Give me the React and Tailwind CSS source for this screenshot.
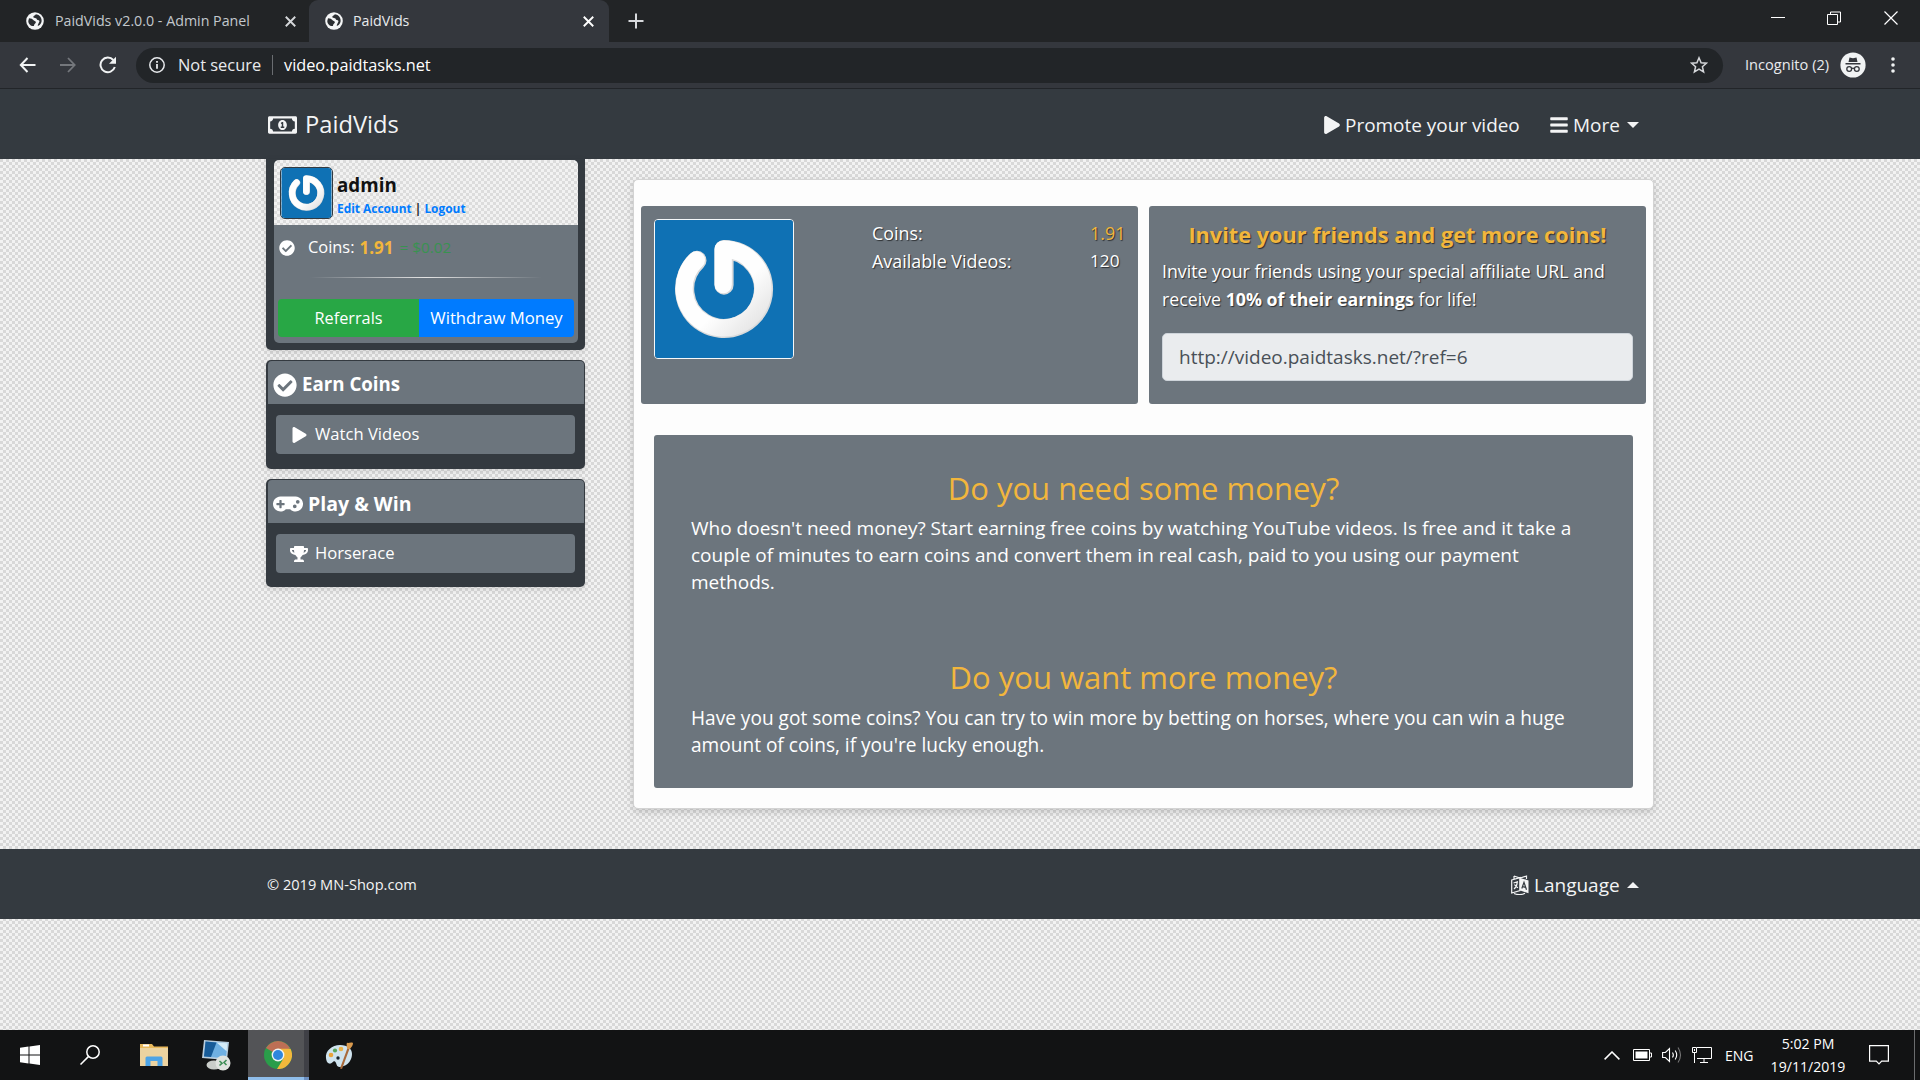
import React from "react";
import { FaPlay, FaBars, FaCheckCircle, FaGamepad, FaTrophy, FaRegMoneyBillAlt } from "react-icons/fa";

function Globe() {
  return (
    <svg viewBox="0 0 18 18" className="h-[18px] w-[18px] shrink-0">
      <circle cx="9" cy="9" r="8.8" fill="#f4f5f6" />
      <path d="M3 6.200c2.200.2 3.800.8 4.300 1.800.4 1 2.700 1 2.600 2.300-.1 1.300-1.800 1.300-2 3.700C5 14.500 2.300 12 2.300 9z" fill="#2b2e32" />
      <path d="M9.800 2.300c-.2 1.200-2.300 1.200-2.500 2.500-.1 1.200 1.500 1.200 2.600 1.400 1 .2.700 1.600 1.900 1.800 1.500.2 2.100 1 1.300 2.300-.7 1-.8 2-1.500 3.200l.9.3c2.200-1.300 3.400-3.500 3.100-5.800C15.200 4.900 12.800 2.500 9.800 2.300z" fill="#2b2e32" />
    </svg>
  );
}

function Cross({ className }) {
  return (
    <svg viewBox="0 0 10 10" className={className} fill="none" stroke="currentColor">
      <path d="M.7.7l8.600 8.600M9.300.7L.7 9.300" strokeWidth="1.700" />
    </svg>
  );
}

function Avatar({ className }) {
  return (
    <svg viewBox="0 0 140 140" className={className}>
      <defs>
        <linearGradient id="ring" x1="0" y1="0" x2="1" y2="1">
          <stop offset="0.6" stopColor="#fefefe" />
          <stop offset="1" stopColor="#e2e2e2" />
        </linearGradient>
      </defs>
      <rect width="140" height="140" fill="#0f71b4" />
      <g fill="none" strokeLinecap="round" strokeLinejoin="round">
        <path d="M42.500 41A40 40 0 1 0 70 30V66" stroke="#d9dadb" strokeWidth="19.500" />
        <path d="M42 40.500A40 40 0 1 0 69.200 29.500V65.500" stroke="url(#ring)" strokeWidth="17.500" />
      </g>
    </svg>
  );
}

function BrowserChrome() {
  return (
    <header className="bg-[#222426] text-[#e8eaed]">
      <div className="flex h-[42px]">
        <div className="flex w-[309px] items-center pl-[26px]">
          <Globe />
          <span className="ml-[11px] w-[197px] text-[14.25px] text-[#c3c8cd]">PaidVids v2.0.0 - Admin Panel</span>
          <Cross className="ml-[33px] h-[11px] w-[11px] text-[#d5d7da]" />
        </div>
        <div className="flex w-[300px] items-center rounded-t-[9px] bg-[#34373d] pl-[16px]">
          <Globe />
          <span className="ml-[10px] w-[57px] text-[14.25px]">PaidVids</span>
          <Cross className="ml-[173px] h-[11px] w-[11px] text-white" />
        </div>
        <svg viewBox="0 0 16 16" className="ml-[19px] mt-[13px] h-[16px] w-[16px]" stroke="#d8dadd" strokeWidth="2">
          <path d="M8 .5v15M.5 8h15" />
        </svg>
        <div className="ml-auto flex items-start pt-[11px]">
          <svg viewBox="0 0 14 14" className="mr-[42px] h-[14px] w-[14px]" stroke="#fff" fill="none">
            <path d="M0 6.500h14" />
          </svg>
          <svg viewBox="0 0 14 14" className="mr-[43px] h-[14px] w-[14px]" stroke="#fff" fill="none">
            <path d="M.5 3.500h10v10h-10zM3.500 3V1h10v10h-3" />
          </svg>
          <svg viewBox="0 0 14 14" className="mr-[22px] h-[14px] w-[14px]" stroke="#fff" strokeWidth="1.200" fill="none">
            <path d="M.5.5l13 13M13.500.5l-13 13" />
          </svg>
        </div>
      </div>
      <div className="flex h-[47px] items-center border-b border-[#222529] bg-[#34373d] pl-[19px]">
        <svg viewBox="0 0 16 16" className="h-[16px] w-[17px]" fill="none" stroke="#f1f3f4" strokeWidth="2">
          <path d="M16 8H1.500M8 1L1.300 8 8 15" />
        </svg>
        <svg viewBox="0 0 16 16" className="ml-[24px] h-[16px] w-[16px]" fill="none" stroke="#74777c" strokeWidth="1.800">
          <path d="M0 8h14.500M8 1l6.700 7L8 15" />
        </svg>
        <svg viewBox="0 0 18 18" className="ml-[23px] h-[18px] w-[18px]" fill="none" stroke="#f1f3f4" strokeWidth="2">
          <path d="M15.800 11A7.300 7.300 0 1 1 14.300 4" />
          <path d="M17 .8v7H10z" fill="#f1f3f4" stroke="none" />
        </svg>
        <div className="ml-[19px] flex h-[35px] w-[1587px] items-center rounded-full bg-[#222528] pl-[13px]">
          <svg viewBox="0 0 16 16" className="h-[16px] w-[16px]" fill="none" stroke="#e8eaed" strokeWidth="1.500">
            <circle cx="8" cy="8" r="7.200" />
            <path d="M8 7v4.800M8 4v1.700" strokeWidth="1.800" />
          </svg>
          <span className="ml-[13px] w-[83px] whitespace-nowrap text-[16.4px]">Not secure</span>
          <span className="ml-[11px] h-[20px] w-px bg-[#6a6d71]" />
          <span className="ml-[11px] text-[16.3px] text-white">video.paidtasks.net</span>
          <svg viewBox="0 0 18 18" className="ml-auto mr-[15px] h-[18px] w-[18px]" fill="none" stroke="#d5d7da" strokeWidth="1.500">
            <path d="M9 1.800l2.100 4.900 5.300.5-4 3.500 1.200 5.200L9 13.100l-4.600 2.800 1.200-5.200-4-3.500 5.300-.5z" />
          </svg>
        </div>
        <span className="ml-[22px] w-[84px] whitespace-nowrap text-[14.6px]">Incognito (2)</span>
        <svg viewBox="0 0 26 26" className="ml-[11px] h-[26px] w-[26px]">
          <circle cx="13" cy="13" r="12.600" fill="#f1f3f4" />
          <path d="M9.500 5.500l3.500.8 3.500-.8 1 4.500h-9zM5.500 11h15v1.500h-15z" fill="#34373d" />
          <g fill="none" stroke="#34373d" strokeWidth="1.300">
            <circle cx="9.200" cy="17" r="2.400" />
            <circle cx="16.800" cy="17" r="2.400" />
            <path d="M11.600 16.600q1.400-.8 2.800 0" />
          </g>
        </svg>
        <svg viewBox="0 0 4 18" className="ml-[25px] h-[18px] w-[4px]" fill="#f1f3f4">
          <circle cx="2" cy="3" r="1.800" />
          <circle cx="2" cy="9" r="1.800" />
          <circle cx="2" cy="15" r="1.800" />
        </svg>
      </div>
    </header>
  );
}

function Navbar() {
  return (
    <nav className="flex h-[70px] shrink-0 items-center bg-[#343a40] pt-[2px] pl-[268px] pr-[281px] text-[#f3f4f5]">
      <FaRegMoneyBillAlt className="h-[24px] w-[29px]" />
      <span className="ml-[8px] text-[23.7px]">PaidVids</span>
      <FaPlay className="ml-auto h-[18px] w-[16px]" />
      <span className="ml-[5px] w-[176px] whitespace-nowrap text-[18.95px]">Promote your video</span>
      <FaBars className="ml-[29px] h-[20px] w-[18px]" />
      <span className="ml-[5px] w-[48px] text-[18.95px]">More</span>
      <span className="ml-[6px] border-x-[6px] border-t-[6px] border-x-transparent border-t-[#f3f4f5]" />
    </nav>
  );
}

function AccountCard() {
  return (
    <section className="h-[191px] rounded-b-[5px] bg-[#343a40] pl-[8px] pr-[7px] pt-px text-white shadow-[0_2px_6px_rgba(0,0,0,.12)]">
      <div className="h-[183px] overflow-hidden rounded-[5px] bg-[#6c757d]">
        <div className="flex h-[65px] bg-[repeating-conic-gradient(#dcdcdc_0_25%,#f2f2f2_0_50%)] bg-[length:6px_6px] pl-[6px] pt-[7px]">
          <Avatar className="h-[52px] w-[53px] rounded-[5px] border border-[#343a40]" />
          <div className="ml-[4px] pt-[5px]">
            <div className="text-[18.8px] leading-[26px] font-bold text-[#111]">admin</div>
            <div className="mt-[1px] whitespace-nowrap text-[11.9px] leading-[18px] font-bold text-[#007bff]">
              Edit Account <span className="text-[#222]">|</span> Logout
            </div>
          </div>
        </div>
        <div className="flex h-[45px] items-center pl-[5px] text-[16.4px]">
          <FaCheckCircle className="h-[16px] w-[16px]" />
          <span className="ml-[13px]">Coins:</span>
          <span className="ml-[5px] text-[17px] font-bold text-[#f2b63c]">1.91</span>
          <span className="ml-[6px] text-[15.300px] text-[#399251]">= $0.02</span>
        </div>
        <div className="mx-[36px] mt-[7px] h-px bg-[linear-gradient(90deg,transparent,#e4e4e4_50%,transparent)]" />
        <div className="mx-[4px] mt-[21px] flex h-[38px] overflow-hidden rounded-[4px]">
          <div className="flex w-[141px] items-center justify-center bg-[#28a745] text-[16.3px]">Referrals</div>
          <div className="flex flex-1 items-center justify-center bg-[#007bff] text-[16.7px]">Withdraw Money</div>
        </div>
      </div>
    </section>
  );
}

function MenuCard({ className, icon, title, itemIcon, item }) {
  return (
    <section className={`rounded-[5px] bg-[#343a40] pl-[2px] pr-px pt-px text-white shadow-[0_2px_6px_rgba(0,0,0,.12)] ${className}`}>
      <div className="flex h-[43px] items-center rounded-t-[4px] bg-[#6c757d] pl-[5px] pt-[4px] font-bold">
        {icon}
        <span className="ml-[5px]">{title}</span>
      </div>
      <div className="ml-[8px] mr-[9px] mt-[11px] flex h-[39px] items-center rounded-[4px] bg-[#6c757d] pl-[14px] text-[16.6px]">
        <span className="flex w-[18px] justify-center">{itemIcon}</span>
        <span className="ml-[7px]">{item}</span>
      </div>
    </section>
  );
}

function MainPanel() {
  return (
    <main className="mt-[20px] h-[630px] w-[1021px] rounded-[5px] border border-[#d3d3d3] bg-[#fdfdfd] text-white shadow-[0_3px_7px_rgba(0,0,0,.15)]">
      <div className="mx-[7px] mt-[26px] grid h-[198px] grid-cols-[497px_497px] gap-[11px] [text-shadow:1px_1px_1px_rgba(0,0,0,.6)]">
        <div className="flex rounded-[3px] bg-[#6c757d] pl-[13px] pt-[13px]">
          <Avatar className="h-[140px] w-[140px] rounded-[4px] border border-[#f5f8fa]" />
          <div className="ml-[78px] grid h-[56px] grid-cols-[218px_auto] grid-rows-[28px_28px] items-center text-[17.9px]">
            <span>Coins:</span>
            <span className="text-[#f2b63c]">1.91</span>
            <span>Available Videos:</span>
            <span className="text-[17.2px]">120</span>
          </div>
        </div>
        <div className="rounded-[3px] bg-[#6c757d] px-[13px] pt-[13px]">
          <h2 className="text-center text-[21.7px] leading-[32px] font-bold text-[#f2b63c]">Invite your friends and get more coins!</h2>
          <p className="mt-[6px] whitespace-nowrap text-[17.75px] leading-[28px]">
            Invite your friends using your special affiliate URL and
            <br />
            receive <b>10% of their earnings</b> for life!
          </p>
          <div className="mt-[20px] flex h-[48px] items-center rounded-[5px] border border-[#ced4da] bg-[#eaecee] pl-[16px] text-[19px] text-[#495057] [text-shadow:none]">
            http://video.paidtasks.net/?ref=6
          </div>
        </div>
      </div>
      <div className="mx-[20px] mt-[31px] h-[353px] rounded-[3px] bg-[#6c757d] px-[37px] pt-[33px]">
        <h1 className="text-center text-[31px] leading-[40px] text-[#f2b63c]">Do you need some money?</h1>
        <p className="mt-[7px] whitespace-nowrap text-[19.03px] leading-[27px]">
          Who doesn't need money? Start earning free coins by watching YouTube videos. Is free and it take a<br />
          couple of minutes to earn coins and convert them in real cash, paid to you using our payment
          <br />
          methods.
        </p>
        <h1 className="mt-[61px] text-center text-[31px] leading-[40px] text-[#f2b63c]">Do you want more money?</h1>
        <p className="mt-[8px] whitespace-nowrap text-[19.09px] leading-[27px]">
          Have you got some coins? You can try to win more by betting on horses, where you can win a huge
          <br />
          amount of coins, if you're lucky enough.
        </p>
      </div>
    </main>
  );
}

function Footer() {
  return (
    <footer className="flex h-[70px] shrink-0 items-center bg-[#343a40] pt-[2px] pl-[267px] pr-[281px] text-[#f3f4f5]">
      <span className="text-[14.6px]">© 2019 MN-Shop.com</span>
      <svg viewBox="0 0 18 20" className="ml-auto h-[20px] w-[18px]" fill="none" stroke="#f3f4f5">
        <path d="M.7 5L9 2.600V15.500L.7 18zM3 1v3M3 1l6 2 6.500-2v3M3 18.500c3 1.500 8 1.500 11-.2" strokeWidth="1.200" />
        <path d="M8.500 2.700L17.500 5.500V18.300L8.500 15.300z" fill="#f3f4f5" stroke="none" />
        <path d="M2.500 8l4.500-1.300M3 14c2-1.500 3-4 3.300-6.800M3.500 9.500c.8 1.500 2 2.700 3.500 3.300" strokeWidth="1.200" />
        <path d="M10.800 13.500L13 7.300l2.500 7.500M11.600 11.600l3 .8" stroke="#343a40" strokeWidth="1.200" />
      </svg>
      <span className="ml-[5px] w-[87px] text-[19px]">Language</span>
      <span className="ml-[6px] border-x-[6px] border-b-[6px] border-x-transparent border-b-[#f3f4f5]" />
    </footer>
  );
}

function Taskbar() {
  return (
    <div className="flex h-[50px] items-center bg-[#121314] pl-[20px] text-white">
      <svg viewBox="0 0 20 20" className="h-[20px] w-[20px]" fill="#fff">
        <path d="M0 2.800L8.500 1.600V9.500H0zM9.500 1.500L20 0v9.500H9.500zM0 10.500h8.500v8L0 17.300zM9.500 10.500H20V20L9.500 18.600z" />
      </svg>
      <svg viewBox="0 0 20 20" className="ml-[40px] h-[20px] w-[20px]" fill="none" stroke="#fff" strokeWidth="1.500">
        <circle cx="13" cy="7" r="6.200" />
        <path d="M8.600 11.400L.5 19.500" />
      </svg>
      <svg viewBox="0 0 28 24" className="ml-[40px] h-[24px] w-[28px]">
        <path d="M0 1h12l2 2.500h14V23H0z" fill="#e9b95c" />
        <path d="M3 1.500h6v2H3z" fill="#fff" />
        <path d="M0 5h28v18H0z" fill="#ecd3a0" />
        <path d="M5.500 23v-8q0-1.500 1.500-1.500h14q1.500 0 1.500 1.500v8h-5v-5h-7v5z" fill="#4ea4e6" />
      </svg>
      <svg viewBox="0 0 30 32" className="ml-[33px] h-[32px] w-[30px]">
        <path d="M3 1l25 2-2 18L1 19z" fill="#b9cddd" />
        <path d="M4.500 2.500l22 1.800-1.700 15L3 17.500z" fill="#6fb0e2" />
        <path d="M4.500 2.500l11 .9L10 18 3 17.500z" fill="#175b98" />
        <path d="M15.500 3.400l11 .9-.9 8z" fill="#d4ebf8" />
        <ellipse cx="13" cy="26" rx="7.500" ry="4.500" fill="#c9cdc9" />
        <circle cx="22" cy="24" r="7.500" fill="#dfe3df" />
        <path d="M18.500 22l2.600 2.200-2.600 2.300M25.500 21L23 23.500l2.500 2.500" fill="none" stroke="#3f8f57" strokeWidth="1.600" />
      </svg>
      <div className="ml-[17px] flex h-[50px] w-[56px] items-center justify-center border-b-[3px] border-[#8fbdea] bg-[#535457]">
        <svg viewBox="0 0 28 28" className="mt-[2px] ml-[3px] h-[28px] w-[28px]">
          <circle cx="14" cy="14" r="14" fill="#2a9d4a" />
          <path d="M14 14L1.900 7A14 14 0 0 1 26.100 7z" fill="#bd6f55" />
          <path d="M14 14V7.800H26.500A14 14 0 0 1 13 28L19.500 17.500z" fill="#f2b83c" />
          <circle cx="14" cy="14" r="6.400" fill="#f1f3f4" />
          <circle cx="14" cy="14" r="5" fill="#2f86dd" />
        </svg>
      </div>
      <div className="h-[50px] w-[5px] border-b-[3px] border-[#6c8fc0] bg-[#3f4046]" />
      <svg viewBox="0 0 30 30" className="ml-[16px] h-[30px] w-[30px]">
        <path d="M1 18C0 11 7 5 15 5s12 4 12 9-3 12-12 13c-4 .3-3-4-5-5.500-2-1.200-3 3-6 2-2-.8-2.800-3-3-5.500z" fill="#cfe3ee" />
        <circle cx="6" cy="15" r="2.300" fill="#e8a33b" />
        <circle cx="10" cy="10.500" r="2.100" fill="#58a65c" />
        <circle cx="16" cy="9" r="2.300" fill="#e9b24a" />
        <circle cx="13" cy="18" r="1.700" fill="#17242c" />
        <path d="M15 28.500L22.500 8l2 .8L17 29z" fill="#a8693a" />
        <path d="M22 8.500c.2-2-1-3.500 0-6 1.500 1.500 3.500-1 6 .5 0 3-1.500 3.500-3 6z" fill="#d99a4e" />
      </svg>
      <div className="ml-auto flex items-center">
        <svg viewBox="0 0 16 9" className="h-[9px] w-[16px]" fill="none" stroke="#fff" strokeWidth="1.500">
          <path d="M.6 8.400L8 1l7.400 7.400" />
        </svg>
        <svg viewBox="0 0 19 12" className="ml-[13px] h-[12px] w-[19px]" fill="none" stroke="#fff">
          <path d="M.5.5h16v11H.5zM17 4h1.500v4H17" />
          <path d="M2.500 2.500h12v7h-12z" fill="#fff" stroke="none" />
        </svg>
        <svg viewBox="0 0 20 18" className="ml-[10px] h-[18px] w-[20px]" fill="none" stroke="#fff" strokeWidth="1.100">
          <path d="M.6 6.500h2.800L7.500 2.500v13L3.400 11.500H.6zM10.500 6.500q1.700 2.500 0 5M13.200 4.500q3 4.500 0 9" />
          <path d="M16 1.500q5 7.500 0 15" stroke="#777" />
        </svg>
        <svg viewBox="0 0 20 17" className="ml-[10px] h-[17px] w-[20px]" fill="none" stroke="#fff">
          <path d="M5 .5h14.500v11H5M12 12v3M8 15.500h8M.5.5h4v5h-4zM2.500 6v10M2.500 2v2" />
        </svg>
        <span className="ml-[13px] w-[29px] text-[14px]">ENG</span>
        <div className="ml-[14px] w-[80px] text-center text-[14.1px] leading-[23px]">
          <div>5:02 PM</div>
          <div>19/11/2019</div>
        </div>
        <svg viewBox="0 0 20 20" className="ml-[21px] h-[20px] w-[20px]" fill="none" stroke="#fff" strokeWidth="1.200">
          <path d="M.6.6h18.800v15.500h-6.700L10 18.800 7.300 16.100H.6z" />
        </svg>
        <div className="ml-[25px] mr-[5px] h-[50px] w-px bg-[#6b6c6e]" />
      </div>
    </div>
  );
}

export default function App() {
  return (
    <div className="flex h-[1080px] w-[1920px] flex-col overflow-hidden bg-[repeating-conic-gradient(#d8d8d8_0_25%,#f2f2f2_0_50%)] bg-[length:6px_6px] font-['Open_Sans',sans-serif]">
      <BrowserChrome />
      <Navbar />
      <div className="flex h-[690px] shrink-0 gap-[48px] pl-[266px]">
        <aside className="flex w-[319px] flex-col gap-[10px]">
          <AccountCard />
          <MenuCard
            className="h-[109px] text-[18.7px]"
            icon={<FaCheckCircle className="h-[24px] w-[24px]" />}
            title="Earn Coins"
            itemIcon={<FaPlay className="h-[16px] w-[15px]" />}
            item="Watch Videos"
          />
          <MenuCard
            className="h-[108px] text-[19.5px]"
            icon={<FaGamepad className="h-[24px] w-[30px]" />}
            title="Play & Win"
            itemIcon={<FaTrophy className="h-[16px] w-[18px]" />}
            item="Horserace"
          />
        </aside>
        <MainPanel />
      </div>
      <Footer />
      <div className="flex-1" />
      <Taskbar />
    </div>
  );
}
